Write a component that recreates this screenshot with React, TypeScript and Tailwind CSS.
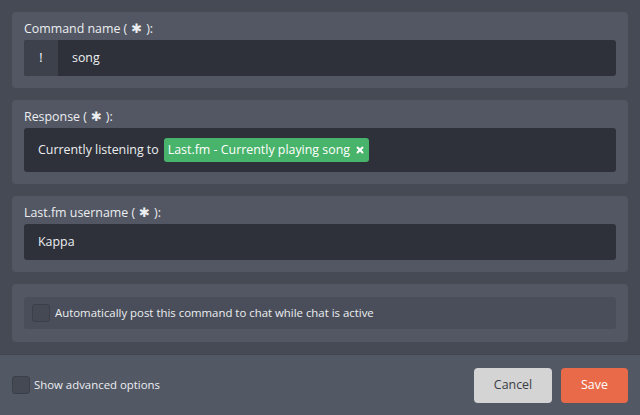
import { X } from 'lucide-react';

function Req() {
  return <span className="mx-[4px] font-['DejaVu_Sans'] text-[13px] font-bold">✱</span>;
}

function Card({ children, className = '' }: { children: React.ReactNode; className?: string }) {
  return <div className={`rounded-[4px] bg-[#525763] px-3 ${className}`}>{children}</div>;
}

function Checkbox() {
  return <span className="block h-[18px] w-[18px] shrink-0 rounded-[3px] border border-[#3b3f49] bg-[#454954]" />;
}

export default function App() {
  return (
    <div className="flex h-[415px] w-[640px] flex-col bg-[#464a55] font-['Open_Sans',sans-serif] text-[12.4px] text-[#eceef1]">
      <div className="flex flex-1 flex-col gap-3 p-3">
        <Card className="pb-3 pt-2">
          <div className="mb-[2px] leading-[18px]">
            Command name (<Req />):
          </div>
          <div className="flex h-9 overflow-hidden rounded-[3px] bg-[#2e3139]">
            <div className="flex w-[34px] items-center justify-center bg-[#3d414b] text-white">!</div>
            <div className="flex items-center pl-[14px]">song</div>
          </div>
        </Card>

        <Card className="pb-3 pt-2">
          <div className="mb-[2px] leading-[18px]">
            Response (<Req />):
          </div>
          <div className="flex h-11 items-center rounded-[3px] bg-[#2e3139] pl-[14px]">
            <span>Currently listening to</span>
            <span className="ml-[5px] flex h-6 items-center gap-[5px] rounded-[3px] bg-[#48b36a] pl-[4px] pr-[4px] text-white">
              Last.fm - Currently playing song
              <X className="h-[10px] w-[10px]" strokeWidth={4.5} />
            </span>
          </div>
        </Card>

        <Card className="pb-3 pt-2">
          <div className="mb-[2px] leading-[18px]">
            Last.fm username (<Req />):
          </div>
          <div className="flex h-9 items-center rounded-[3px] bg-[#2e3139] pl-[14px]">Kappa</div>
        </Card>

        <Card className="py-[13px]">
          <div className="flex h-8 items-center gap-[5px] rounded-[3px] bg-[#4a4e5a] px-2 text-[11.4px]">
            <Checkbox />
            Automatically post this command to chat while chat is active
          </div>
        </Card>
      </div>

      <div className="flex h-[61px] items-center justify-between border-t border-[#41454f] bg-[#535865] px-3">
        <label className="flex items-center gap-[4px] text-[11.4px]">
          <Checkbox />
          Show advanced options
        </label>
        <div className="flex gap-[9px]">
          <button className="h-[35px] w-[78px] rounded-[4px] bg-[#d4d4d4] text-[12.4px] text-[#3a3d45]">Cancel</button>
          <button className="h-[35px] w-[67px] rounded-[4px] bg-[#e96a48] text-[12.4px] text-white">Save</button>
        </div>
      </div>
    </div>
  );
}
